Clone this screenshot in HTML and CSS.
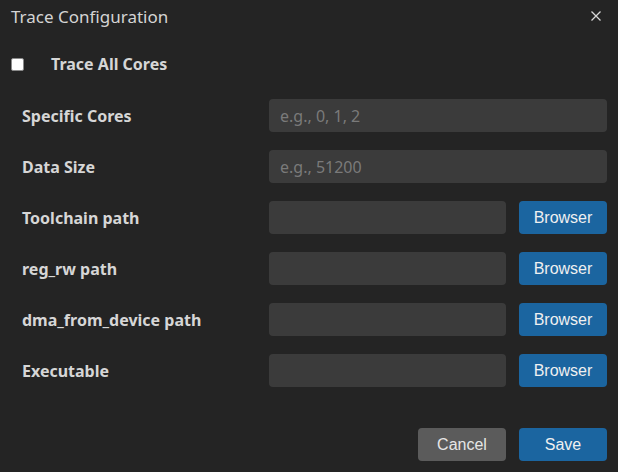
FILE: index.html
```html
<!DOCTYPE html>
<html>
<head>
<meta charset="utf-8">
<link rel="stylesheet" href="styles.css">
</head>
<body>
<div class="dialog">
  <header class="dialog-header">
    <h1 class="dialog-title">Trace Configuration</h1>
    <button class="close-btn" aria-label="Close">
      <svg width="10" height="10" viewBox="0 0 10 10"><path d="M0.5 0.5L9.5 9.5M9.5 0.5L0.5 9.5" stroke="#d8d8d8" stroke-width="1.3" fill="none"/></svg>
    </button>
  </header>
  <div class="check-row">
    <input type="checkbox" class="check">
    <span class="check-label">Trace All Cores</span>
  </div>
  <div class="form">
    <label class="label">Specific Cores</label>
    <div class="field"><input class="input" placeholder="e.g., 0, 1, 2"></div>
    <label class="label">Data Size</label>
    <div class="field"><input class="input" placeholder="e.g., 51200"></div>
    <label class="label">Toolchain path</label>
    <div class="field"><input class="input"><button class="btn btn-primary">Browser</button></div>
    <label class="label">reg_rw path</label>
    <div class="field"><input class="input"><button class="btn btn-primary">Browser</button></div>
    <label class="label">dma_from_device path</label>
    <div class="field"><input class="input"><button class="btn btn-primary">Browser</button></div>
    <label class="label">Executable</label>
    <div class="field"><input class="input"><button class="btn btn-primary">Browser</button></div>
  </div>
  <footer class="dialog-footer">
    <button class="btn btn-secondary">Cancel</button>
    <button class="btn btn-primary">Save</button>
  </footer>
</div>
</body>
</html>
```
FILE: styles.css
```css
html, body {
  margin: 0;
  padding: 0;
  background: #242424;
  width: 618px;
  height: 472px;
  overflow: hidden;
}
.dialog {
  font-family: "Noto Sans", "DejaVu Sans", sans-serif;
  color: #d6d6d6;
  padding: 0 11px 0 11px;
}
.dialog-header {
  display: flex;
  justify-content: space-between;
  align-items: center;
  height: 32px;
}
.dialog-title {
  margin: 0;
  font-size: 17px;
  font-weight: 400;
  color: #d4d4d4;
}
.close-btn {
  background: none;
  border: 0;
  padding: 0;
  margin-right: 6px;
  width: 10px;
  height: 10px;
  display: flex;
}
.check-row {
  display: flex;
  align-items: center;
  height: 30px;
  margin-top: 17px;
}
.check {
  margin: 0;
  width: 13px;
  height: 13px;
  appearance: none;
  background: #fff;
  border-radius: 2px;
  border: 1px solid #8a8a8a;
}
.check-label {
  margin-left: 27px;
  font-size: 16px;
  font-weight: 700;
  color: #d6d6d6;
}
.form {
  display: grid;
  grid-template-columns: 247px minmax(0, 1fr);
  row-gap: 18px;
  align-items: center;
  margin-top: 20px;
  padding-left: 11px;
}
.label {
  font-size: 16px;
  font-weight: 700;
  color: #d6d6d6;
}
.field {
  display: flex;
  gap: 13px;
  height: 33px;
  min-width: 0;
}
.input {
  flex: 1 1 0;
  width: 0;
  min-width: 0;
  box-sizing: border-box;
  height: 33px;
  background: #3b3b3b;
  border: 0;
  border-radius: 4px;
  padding: 0 11px;
  font-family: "Noto Sans", sans-serif;
  font-size: 16px;
  color: #d6d6d6;
  outline: none;
}
.input::placeholder {
  color: #7a7a7a;
}
.btn {
  box-sizing: border-box;
  flex: none;
  width: 88px;
  height: 33px;
  border: 0;
  border-radius: 4px;
  font-family: "Liberation Sans", Arial, sans-serif;
  font-size: 16px;
  color: #f0f0f0;
  padding: 0;
}
.btn-primary {
  background: #1b65a0;
}
.btn-secondary {
  background: #5b5b5b;
  color: #e6e6e6;
}
.dialog-footer {
  display: flex;
  justify-content: flex-end;
  gap: 13px;
  margin-top: 41px;
}
```
